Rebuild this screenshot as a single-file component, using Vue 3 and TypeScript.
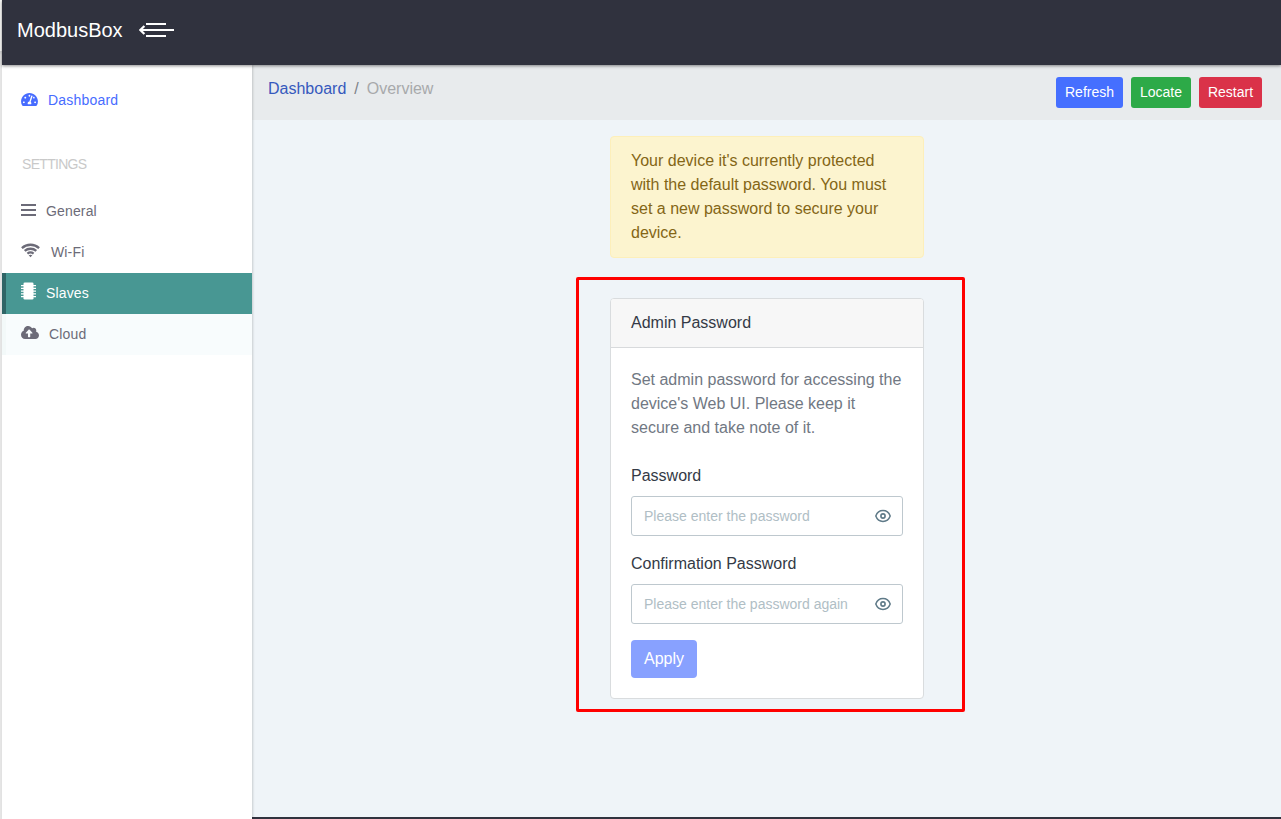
<script setup lang="ts">
import { ref } from 'vue'

interface NavItem {
  id: string
  label: string
  state?: 'active' | 'hover'
}

interface Field {
  id: string
  label: string
  placeholder: string
}

const settings: NavItem[] = [
  { id: 'general', label: 'General' },
  { id: 'wifi', label: 'Wi-Fi' },
  { id: 'slaves', label: 'Slaves', state: 'active' },
  { id: 'cloud', label: 'Cloud', state: 'hover' },
]

const fields: Field[] = [
  { id: 'password', label: 'Password', placeholder: 'Please enter the password' },
  { id: 'confirmation', label: 'Confirmation Password', placeholder: 'Please enter the password again' },
]

const values = ref<Record<string, string>>({ password: '', confirmation: '' })
const revealed = ref<Record<string, boolean>>({ password: false, confirmation: false })
</script>

<template>
  <div class="page">
    <div class="edge"></div>
    <div class="app">
      <header class="topbar">
        <span class="brand">ModbusBox</span>
        <svg class="toggle" width="36" height="16" viewBox="0 0 36 16">
          <path d="M7 2H27M1 8H35M7 14H27" fill="none" stroke="#fff" stroke-width="2" />
          <path d="M5.4 4L1.3 8L5.4 12" fill="none" stroke="#fff" stroke-width="2.3" />
        </svg>
      </header>
      <div class="columns">
        <nav class="sidebar">
          <a class="item dashboard">
            <svg width="17" height="15" viewBox="0 0 576 512">
              <path fill="currentColor" d="M288 32C128.94 32 0 160.94 0 320c0 52.8 14.25 102.26 39.06 144.8 5.61 9.62 16.3 15.2 27.44 15.2h443c11.14 0 21.83-5.58 27.44-15.2C561.75 422.26 576 372.8 576 320c0-159.06-128.94-288-288-288zm0 64c14.71 0 26.58 10.13 30.32 23.65-1.11 2.26-2.64 4.23-3.45 6.67l-9.22 27.67c-5.13 3.49-10.97 6.01-17.64 6.01-17.67 0-32-14.33-32-32S270.33 96 288 96zM96 384c-17.67 0-32-14.33-32-32s14.33-32 32-32 32 14.33 32 32-14.33 32-32 32zm48-160c-17.67 0-32-14.33-32-32s14.33-32 32-32 32 14.33 32 32-14.33 32-32 32zm246.77-72.41l-61.33 184C343.13 347.33 352 364.54 352 384c0 11.72-3.38 22.55-8.88 32H232.88c-5.5-9.45-8.88-20.28-8.88-32 0-33.94 26.5-61.43 59.9-63.59l61.34-184.01c4.17-12.56 17.73-19.45 30.36-15.17 12.57 4.19 19.35 17.79 15.17 30.36zm14.66 57.2l15.52-46.55c3.47-1.29 7.13-2.23 11.05-2.23 17.67 0 32 14.33 32 32s-14.33 32-32 32c-11.38-.01-20.89-6.28-26.57-15.22zM480 384c-17.67 0-32-14.33-32-32s14.33-32 32-32 32 14.33 32 32-14.33 32-32 32z" />
            </svg>
            <span>Dashboard</span>
          </a>
          <h2 class="section">SETTINGS</h2>
          <a v-for="item in settings" :key="item.id" class="item" :class="[item.id, item.state]">
            <svg v-if="item.id === 'general'" width="15" height="14" viewBox="0 0 15 14">
              <path d="M0 2H15M0 7H15M0 12H15" stroke="currentColor" stroke-width="2.2" />
            </svg>
            <svg v-else-if="item.id === 'wifi'" width="19" height="15" viewBox="0 0 19 15">
              <path d="M.9 5.1C5.7 .6 13.3 .6 18.1 5.1M3.7 7.9C7 5 12 5 15.3 7.9M6.4 10.6C8.2 9.2 10.8 9.2 12.6 10.6" fill="none" stroke="currentColor" stroke-width="2.3" />
              <path d="M7.7 12.2Q9.5 11.1 11.3 12.2L9.5 14.2Z" fill="currentColor" />
            </svg>
            <svg v-else-if="item.id === 'slaves'" width="15" height="18" viewBox="0 0 15 18">
              <rect x="2.5" y=".5" width="10" height="17" rx="1.3" fill="currentColor" />
              <path d="M0 3.5H15M0 6.25H15M0 9H15M0 11.75H15M0 14.5H15" stroke="currentColor" stroke-width="1.25" />
            </svg>
            <svg v-else width="18" height="15" viewBox="0 0 640 512" preserveAspectRatio="none">
              <path fill="currentColor" d="M537.6 226.6c4.1-10.7 6.4-22.4 6.4-34.6 0-53-43-96-96-96-19.7 0-38.1 6-53.3 16.2C367 64.2 315.3 32 256 32c-88.4 0-160 71.6-160 160 0 2.7.1 5.4.2 8.1C40.2 219.8 0 273.2 0 336c0 79.5 64.5 144 144 144h368c70.7 0 128-57.3 128-128 0-61.9-44-113.6-102.4-125.4zM393.4 288H328v112c0 8.8-7.2 16-16 16h-48c-8.8 0-16-7.2-16-16V288h-65.4c-14.3 0-21.4-17.2-11.3-27.3l105.4-105.4c6.2-6.2 16.4-6.2 22.6 0l105.4 105.4c10.1 10.1 2.9 27.3-11.3 27.3z" />
            </svg>
            <span>{{ item.label }}</span>
          </a>
        </nav>
        <main class="main">
          <div class="subbar">
            <div class="crumbs">
              <a class="link">Dashboard</a><span class="slash">/</span><span class="current">Overview</span>
            </div>
            <div class="actions">
              <button class="btn refresh">Refresh</button>
              <button class="btn locate">Locate</button>
              <button class="btn restart">Restart</button>
            </div>
          </div>
          <div class="content">
            <div class="alert">
              Your device it's currently protected<br />with the default password. You must<br />set a new password to secure your<br />device.
            </div>
            <div class="highlight">
              <section class="card">
                <div class="card-head">Admin Password</div>
                <form class="card-body" @submit.prevent>
                  <p class="hint">
                    Set admin password for accessing the<br />device's Web UI. Please keep it<br />secure and take note of it.
                  </p>
                  <div v-for="field in fields" :key="field.id" class="field">
                    <label :for="field.id">{{ field.label }}</label>
                    <div class="control">
                      <input
                        :id="field.id"
                        v-model="values[field.id]"
                        :type="revealed[field.id] ? 'text' : 'password'"
                        :placeholder="field.placeholder"
                      />
                      <svg class="eye" width="16" height="14" viewBox="0 0 16 14" @click="revealed[field.id] = !revealed[field.id]">
                        <path d="M.8 7C2.2 3.2 4.8 1.6 8 1.6S13.8 3.2 15.2 7C13.8 10.8 11.2 12.4 8 12.4S2.2 10.8 .8 7Z" fill="none" stroke="#5f7a88" stroke-width="1.5" />
                        <circle cx="8" cy="7" r="2.1" fill="none" stroke="#5f7a88" stroke-width="1.6" />
                      </svg>
                    </div>
                  </div>
                  <button class="apply">Apply</button>
                </form>
              </section>
            </div>
          </div>
          <div class="footer"></div>
        </main>
      </div>
    </div>
  </div>
</template>

<style>
body {
  margin: 0;
  overflow: hidden;
}
</style>

<style scoped>
.page,
.page * {
  box-sizing: border-box;
}
.page {
  display: flex;
  width: 100vw;
  height: 100vh;
  font: 16px/24px "Liberation Sans", Arial, sans-serif;
  color: #343a46;
}
button,
input {
  font-family: inherit;
  margin: 0;
}
.edge {
  width: 2px;
  flex: none;
  background: linear-gradient(#fbfbf9 51px, #d6d6d6 51px, #e5e5e5 55px);
}
.app {
  flex: 1;
  display: flex;
  flex-direction: column;
  min-width: 0;
}
.topbar {
  height: 65px;
  flex: none;
  display: flex;
  align-items: flex-start;
  padding: 15px 15px 0;
  background: #30323e;
  box-shadow: 0 1px 3px rgba(0, 0, 0, 0.45);
  z-index: 2;
}
.brand {
  font-size: 20px;
  line-height: 30px;
  color: #fff;
  width: 122px;
}
.toggle {
  margin-top: 7px;
}
.columns {
  flex: 1;
  display: flex;
  min-height: 0;
}
.sidebar {
  width: 250px;
  flex: none;
  padding-top: 15px;
  background: #fff;
  box-shadow: 1px 0 2px rgba(0, 0, 0, 0.16);
  z-index: 1;
}
.item {
  height: 41px;
  display: flex;
  align-items: center;
  padding: 0 0 2px 15px;
  border-left: 4px solid transparent;
  font-size: 14px;
  line-height: 20px;
  letter-spacing: 0.15px;
  color: #6c6b78;
}
.item svg {
  flex: none;
  margin-bottom: 2px;
}
.item span {
  margin-left: 10px;
}
.dashboard {
  color: #476cff;
  letter-spacing: 0.2px;
}
.dashboard svg {
  margin-bottom: 0;
}
.item.wifi span {
  margin-left: 11px;
}
.item.slaves svg {
  margin-bottom: 4px;
}
.item.active {
  color: #fff;
  background: #489793;
  border-left-color: #2f6566;
}
.item.hover {
  background: #f8fcfd;
  border-left-color: #f3f9f9;
}
.section {
  margin: 0;
  height: 70px;
  padding: 33px 0 0 20px;
  font-size: 14px;
  line-height: 20px;
  font-weight: 400;
  letter-spacing: -0.7px;
  color: #c9c9c9;
}
.main {
  flex: 1;
  display: flex;
  flex-direction: column;
  background: #eff4f8;
}
.subbar {
  height: 55px;
  flex: none;
  display: flex;
  justify-content: space-between;
  padding: 12px 19px 0 16px;
  background: #e8ebed;
}
.link {
  color: #3659bd;
}
.slash {
  margin: 0 8px;
  color: #7c8288;
}
.current {
  color: #a7a9ab;
}
.actions {
  display: flex;
  gap: 8px;
}
.btn {
  height: 31px;
  border: 0;
  border-radius: 3px;
  padding: 0;
  font-size: 14px;
  line-height: 21px;
  color: #fff;
}
.refresh {
  width: 67px;
  background: #456fff;
}
.locate {
  width: 60px;
  background: #2daa48;
}
.restart {
  width: 63px;
  background: #da3249;
}
.content {
  flex: 1;
  padding: 16px 0 0 324px;
}
.alert {
  width: 314px;
  height: 122px;
  margin-left: 34px;
  padding: 12px 20px;
  border: 1px solid #fdefba;
  border-radius: 4px;
  background: #fcf4cf;
  color: #846616;
}
.highlight {
  width: 389px;
  height: 435px;
  margin-top: 19px;
  padding: 18px 38px 10px 31px;
  border: 3px solid #ff0000;
  border-radius: 2px;
}
.card {
  height: 401px;
  border: 1px solid #d9dcde;
  border-radius: 4px;
  background: #fff;
  overflow: hidden;
}
.card-head {
  height: 49px;
  padding: 12px 20px 0;
  background: #f7f7f7;
  border-bottom: 1px solid #d8dadc;
}
.card-body {
  padding: 20px 20px 0;
}
.hint {
  margin: 0 0 24px;
  color: #717883;
}
.field {
  margin-bottom: 16px;
}
label {
  display: block;
  margin-bottom: 8px;
}
.control {
  display: flex;
  align-items: center;
  height: 40px;
  padding: 0 11px 0 12px;
  border: 1px solid #bec8ce;
  border-radius: 3px;
}
input {
  flex: 1;
  min-width: 0;
  height: 20px;
  padding: 0;
  border: 0;
  outline: 0;
  background: none;
  font-size: 14px;
}
input::placeholder {
  color: #b0bec5;
  opacity: 1;
}
.eye {
  flex: none;
}
.apply {
  display: block;
  width: 66px;
  height: 38px;
  border: 0;
  border-radius: 4px;
  padding: 0;
  background: #88a1ff;
  color: #fff;
  font-size: 16px;
}
.footer {
  height: 2px;
  flex: none;
  background: #30323e;
}
</style>
